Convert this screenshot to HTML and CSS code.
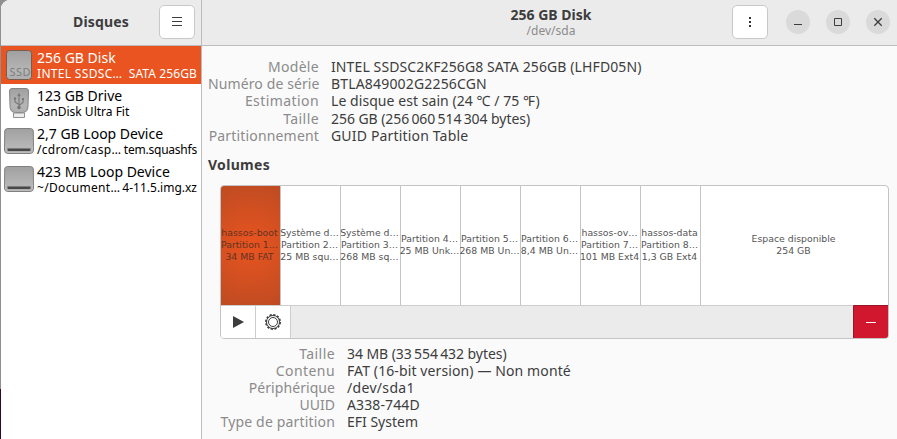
FILE: index.html
```html
<!DOCTYPE html>
<html lang="fr">
<head>
<meta charset="utf-8">
<title>Disques</title>
<link rel="stylesheet" href="styles.css">
</head>
<body>
<svg class="defs" width="0" height="0" aria-hidden="true">
  <defs>
    <linearGradient id="metal" x1="0" y1="0" x2="0" y2="1"><stop offset="0" stop-color="#a0a0a0"/><stop offset=".7" stop-color="#b6b6b6"/><stop offset="1" stop-color="#adadad"/></linearGradient>
    <symbol id="hdd" viewBox="0 0 32 32">
      <path d="M3.500 3.500H26.500Q29 3.500 29.300 6L29.500 25Q29.500 28.500 26 28.500H4Q.5 28.500 .5 25L.7 6Q1 3.500 3.500 3.500Z" fill="url(#metal)" stroke="#808080"/>
      <path d="M1.500 21.500V25Q1.500 27.500 4 27.500H26Q28.500 27.500 28.500 25V21.500" fill="none" stroke="#c8c8c8" stroke-width=".6"/>
      <path d="M3.500 23.500H26.500V25Q26.500 26 25.500 26H4.500Q3.500 26 3.500 25Z" fill="#494949"/>
    </symbol>
  </defs>
</svg>
<div class="window">
  <aside class="sidebar">
    <header class="bar side-bar">
      <h1 class="title app-title">Disques</h1>
      <button class="btn menu"><svg width="16" height="16"><path d="M3 3.500H13M3 7.500H13M3 11.500H13" stroke="#3d3d3d"/></svg></button>
    </header>
    <ul class="devices">
      <li class="device selected">
        <svg class="icon" width="32" height="32"><rect x="2.500" y="1.500" width="25" height="29" rx="3" fill="url(#metal)" stroke="#755d50"/><text x="5.500" y="27" class="ssd" textLength="21">SSD</text></svg>
        <div class="info"><div class="name">256 GB Disk</div><div class="sub"><span class="wide">INTEL SSDSC…</span><span class="loose">SATA 256GB</span></div></div>
      </li>
      <li class="device">
        <svg class="icon" width="32" height="32"><path d="M8 1.500H22Q24.500 1.500 24.500 4L24 19Q24 25.500 18.500 25.500H11.500Q6 25.500 6 19L5.500 4Q5.500 1.500 8 1.500Z" fill="url(#metal)" stroke="#858585"/><path d="M9.500 26H20.500V30.500H9.500Z" fill="#ececec" stroke="#909090"/><path d="M15 8V20M15 17.500L11 15V11.500M15 18.500L19 15.500V12.500" fill="none" stroke="#777" stroke-width="1.100"/><path d="M15 6L13.200 9H16.800Z" fill="#777"/><circle cx="15" cy="20.500" r="1.800" fill="#777"/><circle cx="11" cy="11.500" r="1.200" fill="#777"/><path d="M18 11H20V13H18Z" fill="#777"/></svg>
        <div class="info"><div class="name">123 GB Drive</div><div class="sub"><span>SanDisk Ultra Fit</span></div></div>
      </li>
      <li class="device">
        <svg class="icon" width="32" height="32"><use href="#hdd"/></svg>
        <div class="info"><div class="name">2,7 GB Loop Device</div><div class="sub"><span class="wide">/cdrom/casp…</span><span class="tight">tem.squashfs</span></div></div>
      </li>
      <li class="device">
        <svg class="icon" width="32" height="32"><use href="#hdd"/></svg>
        <div class="info"><div class="name">423 MB Loop Device</div><div class="sub"><span class="wide">~/Document…</span><span>4-11.5.img.xz</span></div></div>
      </li>
    </ul>
  </aside>
  <main class="main">
    <header class="bar main-bar">
      <div class="heading"><h2 class="title disk-title">256 GB Disk</h2><p class="path">/dev/sda</p></div>
      <button class="btn kebab"><svg width="16" height="16"><path d="M7 3H9V5H7ZM7 7H9V9H7ZM7 11H9V13H7Z" fill="#333"/></svg></button>
      <div class="controls">
        <button class="ctl"><svg width="24" height="24"><path d="M8 14.500H16" stroke="#3d3d3d"/></svg></button>
        <button class="ctl"><svg width="24" height="24"><path d="M8.500 8.500H15.500V15.500H8.500Z" fill="none" stroke="#3d3d3d"/></svg></button>
        <button class="ctl"><svg width="24" height="24"><path d="M8.300 8.300L15.700 15.700M15.700 8.300L8.300 15.700" stroke="#3d3d3d" stroke-width="1.300"/></svg></button>
      </div>
    </header>
    <dl class="facts drive">
      <dt class="wide">Modèle</dt><dd class="loose">INTEL SSDSC2KF256G8 SATA 256GB (LHFD05N)</dd>
      <dt class="loose">Numéro de série</dt><dd class="open">BTLA849002G2256CGN</dd>
      <dt class="wider">Estimation</dt><dd class="fine">Le disque est sain (24 ℃ / 75 ℉)</dd>
      <dt class="wider">Taille</dt><dd class="snug">256 GB (256&#8201;060&#8201;514&#8201;304 bytes)</dd>
      <dt class="open">Partitionnement</dt><dd class="open">GUID Partition Table</dd>
    </dl>
    <h3 class="volumes-title">Volumes</h3>
    <section class="volumes">
      <div class="grid">
        <div class="part active"><span>hassos-boot</span><span>Partition 1…</span><span>34 MB FAT</span></div>
        <div class="part"><span>Système d…</span><span>Partition 2…</span><span>25 MB squ…</span></div>
        <div class="part"><span>Système d…</span><span>Partition 3…</span><span>268 MB sq…</span></div>
        <div class="part"><span>Partition 4…</span><span>25 MB Unk…</span></div>
        <div class="part"><span>Partition 5…</span><span>268 MB Un…</span></div>
        <div class="part"><span>Partition 6…</span><span>8,4 MB Un…</span></div>
        <div class="part"><span>hassos-ov…</span><span>Partition 7…</span><span>101 MB Ext4</span></div>
        <div class="part"><span>hassos-data</span><span>Partition 8…</span><span>1,3 GB Ext4</span></div>
        <div class="part free"><span>Espace disponible</span><span>254 GB</span></div>
      </div>
      <div class="toolbar">
        <button class="tool"><svg width="16" height="16"><path d="M3 2L14 8L3 14Z" fill="#3d3d3d"/></svg></button>
        <button class="tool"><svg width="18" height="18"><circle cx="9" cy="9" r="7.200" fill="none" stroke="#3d3d3d" stroke-width="1.600" stroke-dasharray="2.260 1.510"/><circle cx="9" cy="9" r="6.500" fill="none" stroke="#3d3d3d" stroke-width="1"/><circle cx="9" cy="9" r="4.500" fill="none" stroke="#3d3d3d" stroke-width="1"/></svg></button>
        <button class="delete"><svg width="16" height="16"><path d="M3 8.500H13" stroke="#fff"/></svg></button>
      </div>
    </section>
    <dl class="facts partition">
      <dt class="wider">Taille</dt><dd class="snug">34 MB (33&#8201;554&#8201;432 bytes)</dd>
      <dt class="wider">Contenu</dt><dd class="loose">FAT (16-bit version) — Non monté</dd>
      <dt class="fine">Périphérique</dt><dd class="wide">/dev/sda1</dd>
      <dt>UUID</dt><dd class="loose">A338-744D</dd>
      <dt class="open">Type de partition</dt><dd>EFI System</dd>
    </dl>
  </main>
</div>
</body>
</html>
```
FILE: styles.css
```css
* { box-sizing: border-box; margin: 0; padding: 0; }
html { height: 100%; }
body {
  height: 439px;
  overflow: hidden;
  padding-left: 1px;
  background: linear-gradient(#8f8f8f 389px, #300a24 389px);
  font: 14px/17px "Noto Sans", sans-serif;
  color: #3d3d3d;
}
.defs { position: absolute; }
button { border: 0; font: inherit; display: flex; align-items: center; justify-content: center; }
.window { display: flex; height: 439px; border-radius: 9px 0 0 0; overflow: hidden; background: #fafafa; }
.sidebar { width: 201px; background: #fff; border-right: 1px solid #bdbdbd; }
.main { flex: 1; min-width: 0; }
.bar { height: 46px; background: #ebebeb; border-bottom: 1px solid #bdbdbd; display: flex; }
.side-bar { padding: 5px 6px 0 0; justify-content: flex-end; }
.title { font-size: 14px; line-height: 17px; font-weight: 700; white-space: nowrap; }
.app-title { width: 86px; margin-top: 8px; letter-spacing: .15px; }
.btn { width: 36px; height: 34px; background: #fff; border: 1px solid #c9c9c9; border-radius: 5px; }
.main-bar { padding: 5px 7px 0 0; }
.heading { width: 530px; padding-left: 168px; display: flex; flex-direction: column; align-items: center; margin-top: 1px; }
.path { font-size: 12px; line-height: 15px; color: #8b8b8b; }
.controls { display: flex; gap: 16px; margin: 5px 0 0 18px; }
.ctl { width: 24px; height: 24px; border-radius: 50%; background: #dadada; }

/* Letter fitting, from tight to wide */
.tight { letter-spacing: -.22px; }
.snug { letter-spacing: -.06px; }
.fine { letter-spacing: .06px; }
.loose { letter-spacing: .11px; }
.open { letter-spacing: .17px; }
.wide { letter-spacing: .32px; }
.wider { letter-spacing: .42px; }

.devices { list-style: none; }
.device { height: 38px; padding: 3px 4px 0 3px; display: flex; color: #000; }
.device.selected { background: #e95420; color: #fff; }
.icon { flex: none; width: 32px; height: 32px; }
.info { flex: 1; min-width: 0; padding-left: 1px; white-space: nowrap; }
.name { line-height: 17px; }
.sub { display: flex; justify-content: space-between; font-size: 12px; line-height: 15px; }
.ssd { font: 11px "Noto Sans", sans-serif; fill: #7d7d7d; }

.facts { display: grid; column-gap: 12px; grid-auto-rows: 17px; white-space: nowrap; }
.facts dt { color: #8b8b8b; text-align: right; }
.drive { grid-template-columns: 111px 1fr; margin: 12px 0 0 6px; grid-template-rows: 17px 17px 18px 17px 17px; }
.partition { grid-template-columns: 127px 1fr; margin: 6px 0 0 6px; }
.volumes-title { font-size: 14px; line-height: 17px; margin: 12px 0 0 6px; letter-spacing: .3px; }

.volumes { width: 669px; height: 154px; margin: 12px 0 0 18px; border: 1px solid #c4c4c4; border-radius: 4px; background: #fff; overflow: hidden; }
.grid { height: 120px; display: flex; border-bottom: 1px solid #cdcdcd; }
.part { width: 60px; flex: none; padding: 0 2px 2px 0; border-right: 1px solid #c4c4c4; display: flex; flex-direction: column; justify-content: center; align-items: center; font: 9.330px/12px "DejaVu Sans", sans-serif; white-space: nowrap; color: #555; }
.part.active { background: radial-gradient(circle at 50% 50%, #e95420, #bd4b22 68px); color: #653322; }
.part.free { flex: 1; border-right: 0; }
.toolbar { height: 32px; display: flex; background: #ebebeb; }
.tool { width: 35px; background: #fff; border-right: 1px solid #cdcdcd; }
.delete { width: 36px; height: 34px; margin: -1px -1px 0 auto; background: #d0172d; border: 1px solid #9a1627; border-radius: 0 0 4px 0; }
```
